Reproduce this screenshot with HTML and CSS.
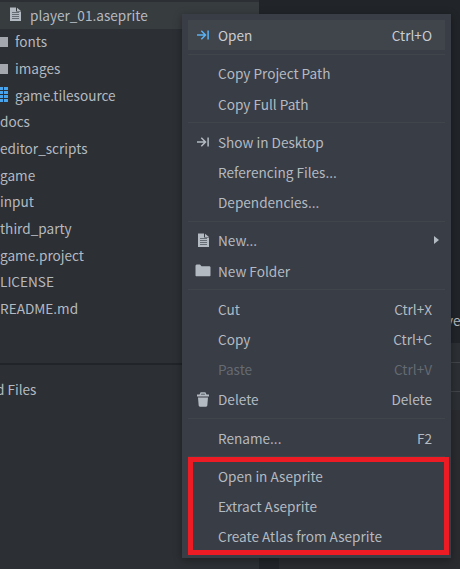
FILE: index.html
```html
<!DOCTYPE html>
<html lang="en">
<head>
<meta charset="utf-8">
<title>Assets</title>
<link rel="stylesheet" href="styles.css">
</head>
<body>
<svg class="defs" width="0" height="0">
  <symbol id="file" viewBox="0 0 12 15"><path fill="currentColor" d="M0 .500H6v4h5v9.500H0zM7 .8l4 3.200H7z"/><path class="lines" d="M2 5.500h7M2 7.500h7M2 9.500h7M2 11.500h7"/></symbol>
  <symbol id="folder" viewBox="0 0 16 13"><path fill="currentColor" d="M.5 1.500 1.500.5H5l1.500 1.700h8.200l.8.8v8.700l-.6.500H1.100l-.6-.5z"/></symbol>
  <symbol id="goto" viewBox="0 0 12 10"><path fill="none" stroke="currentColor" stroke-width="1.500" d="M0 5h8.500M4.300.8l4.200 4.200-4.200 4.200M11.100.5v9"/></symbol>
  <symbol id="trash" viewBox="0 0 12 15"><path fill="currentColor" d="M1 5.500h10l-.7 8.200-1 1H2.700l-1-1zM0 2.500h12v2H0z"/><path fill="none" stroke="currentColor" stroke-width="1.300" d="M3 3 4 1h4l1 2"/></symbol>
  <symbol id="tiles" viewBox="0 0 8 15"><path fill="currentColor" d="M0 0h3v3H0zM4 0h4v3H4zM0 4h3v3H0zM4 4h4v3H4zM0 8h3v3H0zM4 8h4v3H4zM0 12h3v3H0zM4 12h4v3H4z"/></symbol>
</svg>
<div class="app">
  <aside class="side">
    <ul class="tree">
      <li class="node selected"><svg class="node-file"><use href="#file"/></svg>player_01.aseprite</li>
      <li class="node"><i class="node-folder"></i>fonts</li>
      <li class="node"><i class="node-folder"></i>images</li>
      <li class="node"><svg class="node-tiles"><use href="#tiles"/></svg>game.tilesource</li>
      <li class="node">docs</li>
      <li class="node">editor_scripts</li>
      <li class="node">game</li>
      <li class="node">input</li>
      <li class="node">third_party</li>
      <li class="node">game.project</li>
      <li class="node">LICENSE</li>
      <li class="node">README.md</li>
    </ul>
    <div class="changed">d Files</div>
  </aside>
  <main class="main">
    <div class="label">ve</div>
    <div class="field"></div><div class="field"></div><div class="field last"></div>
    <div class="bottom"></div>
  </main>
</div>
<div class="menu">
  <div class="item hover"><svg class="goto"><use href="#goto"/></svg><span>Open</span><kbd>Ctrl+O</kbd></div>
  <hr>
  <div class="item"><span>Copy Project Path</span></div>
  <div class="item"><span>Copy Full Path</span></div>
  <hr>
  <div class="item"><svg class="goto"><use href="#goto"/></svg><span>Show in Desktop</span></div>
  <div class="item"><span>Referencing Files...</span></div>
  <div class="item"><span>Dependencies...</span></div>
  <hr>
  <div class="item"><svg class="file"><use href="#file"/></svg><span>New...</span><i class="arrow"></i></div>
  <div class="item"><svg class="folder"><use href="#folder"/></svg><span>New Folder</span></div>
  <hr>
  <div class="item"><span>Cut</span><kbd>Ctrl+X</kbd></div>
  <div class="item"><span>Copy</span><kbd>Ctrl+C</kbd></div>
  <div class="item disabled"><span>Paste</span><kbd>Ctrl+V</kbd></div>
  <div class="item"><svg class="trash"><use href="#trash"/></svg><span>Delete</span><kbd>Delete</kbd></div>
  <hr>
  <div class="item"><span>Rename...</span><kbd>F2</kbd></div>
  <hr>
  <div class="item"><span>Open in Aseprite</span></div>
  <div class="item"><span>Extract Aseprite</span></div>
  <div class="item"><span>Create Atlas from Aseprite</span></div>
  <div class="highlight"></div>
</div>
</body>
</html>
```

FILE: styles.css
```css
* { box-sizing: border-box; }
body {
  margin: 0;
  width: 460px;
  height: 569px;
  overflow: hidden;
  position: relative;
  background: #212428;
  color: #b4bac1;
  font: 13.600px/20px "Noto Sans CJK SC", "Open Sans", sans-serif;
}
.defs { position: absolute; }
.lines { fill: none; stroke: #666c74; stroke-width: 1; }
.app { display: flex; height: 569px; }
.side { flex: none; width: 259px; background: #2c2f33; display: flex; flex-direction: column; }
.tree { list-style: none; margin: 0; padding: 2px 0 0; height: 365px; border-bottom: 2px solid #212428; }
.node { height: 26.670px; display: flex; align-items: center; white-space: nowrap; padding-bottom: 1px; }
.selected { background: #373c3f; }
.node-file { width: 12px; height: 15px; margin: 0 8px 0 10px; }
.node-folder { width: 8px; height: 10px; margin: 2px 7px 0 0; background: #a4a8ae; }
.node-tiles { width: 8px; height: 15px; margin-right: 7px; color: #49a4ee; }
.changed { padding-top: 14px; text-indent: -4px; }
.main { flex: 1; min-width: 0; display: flex; flex-direction: column; padding-top: 310px; }
.label { height: 33px; padding-left: 187px; }
.field { height: 20px; margin-left: 20px; background: #2c2f33; border-bottom: 1px solid #414448; }
.field + .field { height: 29px; }
.field.last { height: 18px; border: 0; }
.bottom { flex: 1; margin-left: 20px; background: #292b2f; }
.menu {
  position: absolute;
  left: 182px;
  top: 14px;
  width: 269px;
  height: 544px;
  padding: 6px;
  background: #393d45;
  box-shadow: 0 2px 8px rgba(0, 0, 0, .35);
}
.item {
  height: 30.100px;
  display: grid;
  grid-template-columns: 30px 1fr auto;
  align-items: center;
  padding-right: 13px;
  white-space: nowrap;
}
.item span { grid-column: 2; grid-row: 1; }
.item svg { grid-column: 1; grid-row: 1; color: #b4bac1; }
.item kbd { grid-column: 3; grid-row: 1; font: inherit; }
.item .goto { width: 12px; height: 10px; margin-left: 9px; }
.item .file { width: 12px; height: 15px; margin-left: 10px; }
.item .folder { width: 16px; height: 13px; margin-left: 7px; }
.item .trash { width: 12px; height: 15px; margin-left: 9px; }
.item.hover { background: #40444b; color: #c8cdd3; }
.item.hover .goto { color: #5bb0f2; }
.disabled { color: #656a72; }
.arrow { grid-column: 3; grid-row: 1; border: solid transparent; border-width: 4.500px 0 4.500px 5px; border-left-color: #b4bac1; margin-right: -7px; position: relative; left: 2px; }
hr { width: 257px; height: 1px; margin: 3.650px 0; border: 0; background: #40444b; }
.highlight { position: absolute; left: 6px; top: 443px; width: 261px; height: 98px; border: 5px solid #ed1c24; }
```
